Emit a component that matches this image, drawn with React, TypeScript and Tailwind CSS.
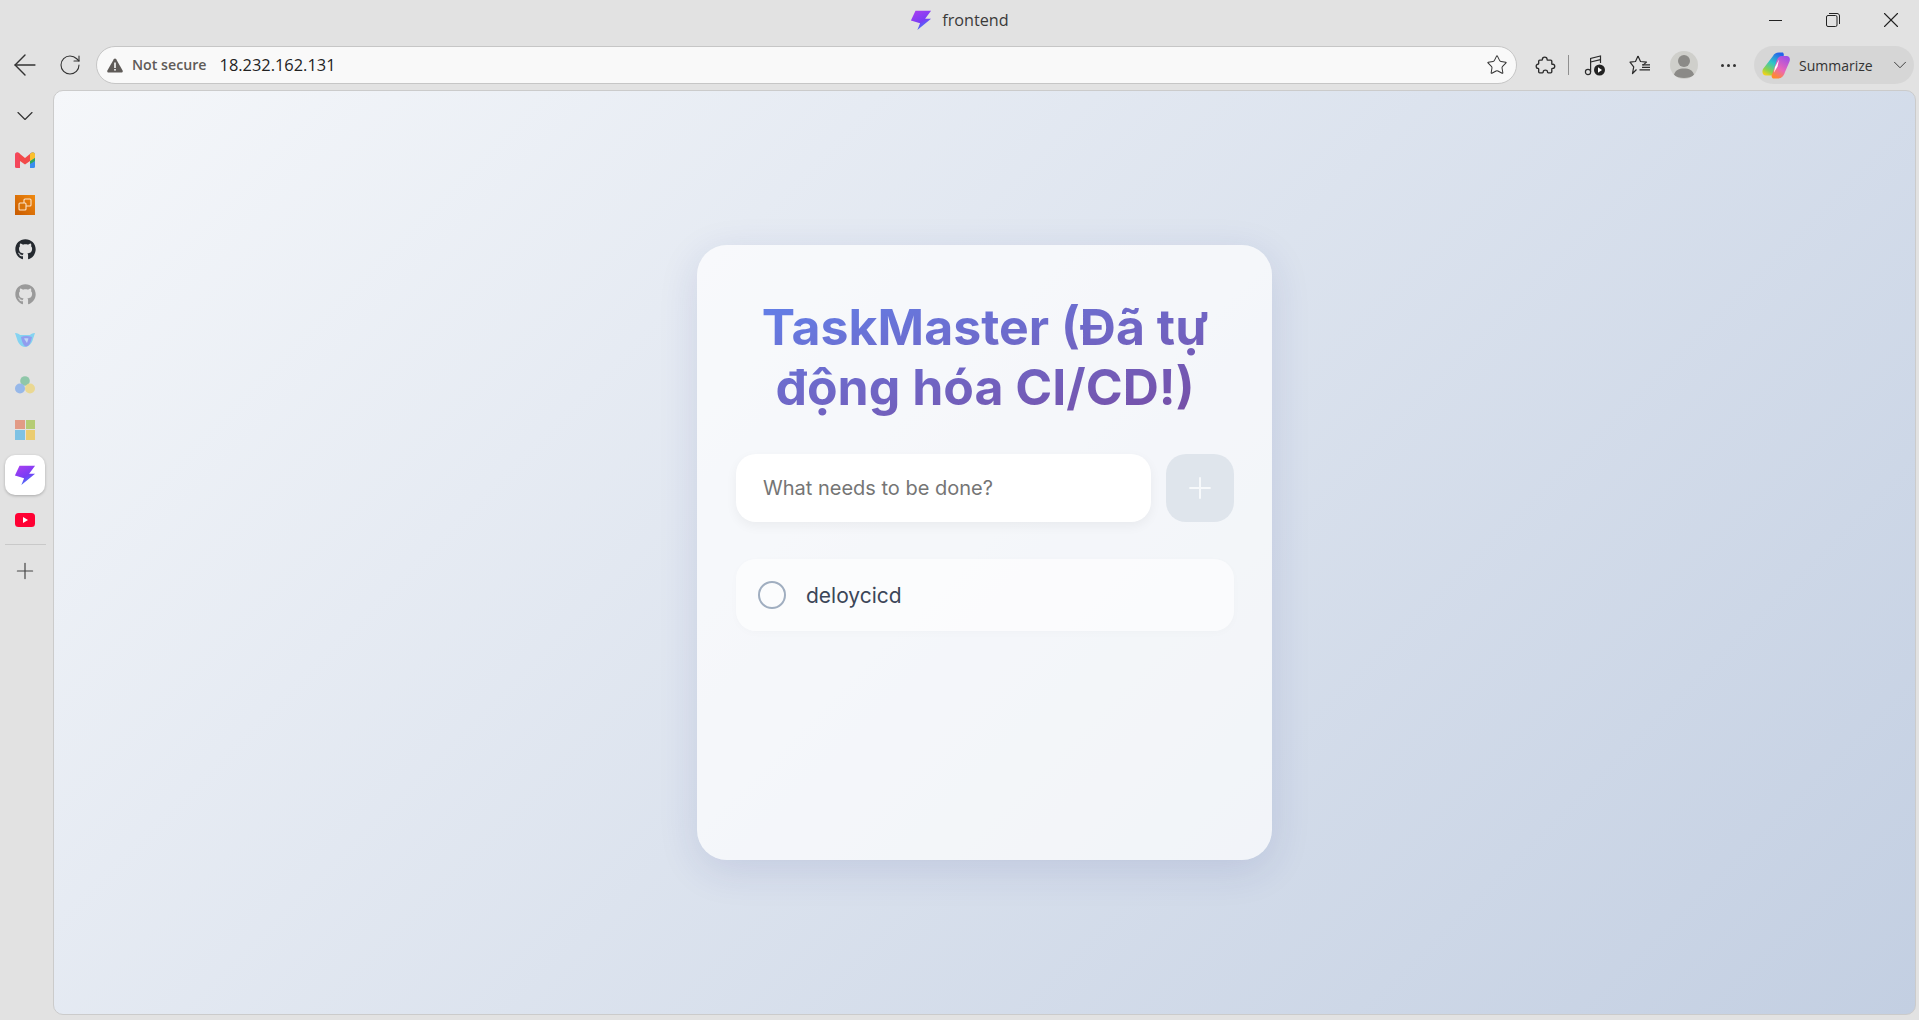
import { ArrowLeft, ChevronDown, Plus, RotateCw, Star, X } from "lucide-react"
import { FaGithub } from "react-icons/fa"

function Bolt({ size, id }: { size: number; id: string }) {
  return (
    <svg width={size} height={size} viewBox="0 0 24 24">
      <defs>
        <linearGradient id={id} x1="0.2" y1="0" x2="0.75" y2="1">
          <stop offset="0" stopColor="#a63ff0" />
          <stop offset="0.55" stopColor="#7a3cf5" />
          <stop offset="1" stopColor="#2f8cf8" />
        </linearGradient>
      </defs>
      <path d="M6 2h17l-6.500 8.500H23L8 23l3-7.500L1 12.500z" fill={`url(#${id})`} />
    </svg>
  )
}

function Gmail() {
  return (
    <svg width="20" height="16" viewBox="0 0 20 16">
      <path d="M0 2.500C0 .8 1.800-.4 3.200.6L5 2v14H1.500A1.500 1.500 0 0 1 0 14.500z" fill="#f4475b" />
      <path d="M15 2 16.800.6C18.200-.4 20 .8 20 2.500v12a1.500 1.500 0 0 1-1.500 1.500H15z" fill="#3b8df0" />
      <path d="M3.200.6 10 6l6.800-5.400L15 9l-5 3.600L5 9z" fill="#f24a4a" />
      <path d="M15 2 16.800.6C18.200-.4 20 .8 20 2.500V6l-5 3.600z" fill="#fbc02d" />
      <path d="M15 9.200 20 6v3l-5 3z" fill="#30a85a" />
    </svg>
  )
}

function AwsBox() {
  return (
    <svg width="20" height="20" viewBox="0 0 20 20">
      <defs>
        <linearGradient id="aws" x1="0" y1="1" x2="1" y2="0">
          <stop offset="0" stopColor="#c85a00" />
          <stop offset="1" stopColor="#f08a10" />
        </linearGradient>
      </defs>
      <rect width="20" height="20" fill="url(#aws)" />
      <rect x="9" y="4" width="7" height="7" rx="1" fill="none" stroke="#fbe3c8" strokeWidth="1.1" />
      <rect x="4" y="8" width="7" height="7" rx="1" fill="#d9740a" stroke="#fbe3c8" strokeWidth="1.1" />
    </svg>
  )
}

function HatIcon() {
  return (
    <svg width="20" height="16" viewBox="0 0 20 16" className="opacity-80">
      <path d="M0 1c3 0 4 1 5 2h10c1-1 2-2 5-2l-2 6c-1 4-4 8-8 8s-7-4-8-8z" fill="#6fd0f5" />
      <path d="M6 5c3-1.500 7-1.500 11 0-1 5-3 9.500-6 9.500-2 0-4-4-5-9.500z" fill="#7f8df2" />
      <path d="M9 6.500c1.500-.5 3-.5 4.500 0L12 11z" fill="#b9d4fb" />
    </svg>
  )
}

function TripleDots() {
  return (
    <svg width="20" height="18" viewBox="0 0 20 18" className="opacity-50">
      <circle cx="10" cy="5" r="4.800" fill="#3fae72" />
      <circle cx="5" cy="12.500" r="5" fill="#4f8ff0" />
      <circle cx="15" cy="12.500" r="5" fill="#f2cf45" />
    </svg>
  )
}

function Windows() {
  return (
    <div className="grid grid-cols-2 gap-[1px] w-[20px] h-[20px] opacity-50">
      <div className="bg-[#e2572c]" />
      <div className="bg-[#8ab80a]" />
      <div className="bg-[#1fa3e6]" />
      <div className="bg-[#f5b800]" />
    </div>
  )
}

function Youtube() {
  return (
    <svg width="20" height="14" viewBox="0 0 20 14">
      <rect width="20" height="14" rx="3.500" fill="#ff0033" />
      <path d="M8 4l5 3-5 3z" fill="#fff" />
    </svg>
  )
}

function Puzzle() {
  return (
    <svg width="21" height="21" viewBox="0 0 20 20" fill="none" stroke="#2b2b2b" strokeWidth="1.300" strokeLinejoin="round">
      <path d="M7 4.200C7 1.500 11.500 1.200 11.500 4c0 .6 0 .9.5.9h3c.6 0 1 .4 1 1v2.400c0 .5.3.7.8.6 2.400-.5 2.900 4 0 3.800-.5 0-.8.2-.8.7v2.600c0 .6-.4 1-1 1h-2.400c-.5 0-.7-.3-.7-.7.2-2.600-4.200-2.600-4.100 0 0 .4-.2.7-.7.7H4.500c-.6 0-1-.4-1-1v-2.700c0-.4-.3-.6-.7-.6C.6 12.800.6 8.700 2.800 8.800c.4 0 .7-.2.7-.6V5.900c0-.6.4-1 1-1h1.900c.4 0 .6-.2.6-.7z" />
    </svg>
  )
}

function MusicPlay() {
  return (
    <svg width="22" height="22" viewBox="0 0 22 22" fill="none" stroke="#2b2b2b" strokeWidth="1.200">
      <circle cx="4" cy="18" r="2.600" />
      <path d="M6.600 18V4.500L16.500 2v7" />
      <path d="M6.600 8l9.900-2.400" />
      <circle cx="15.500" cy="16" r="5.500" fill="#222" stroke="none" />
      <path d="M14 13.300l4 2.700-4 2.700z" fill="#fff" stroke="none" />
    </svg>
  )
}

function FavoritesIcon() {
  return (
    <svg width="22" height="20" viewBox="0 0 22 20" fill="none" stroke="#2b2b2b" strokeWidth="1.200" strokeLinejoin="round">
      <path d="M9 1l2.500 5.500 6 .6-3.500 3M7.500 14.500L3.500 18.500l1.200-6.700L1 7.200l5.500-.7L9 1" />
      <path d="M13 9.800h8M13 12.300h8M10.500 14.800h10.500" />
    </svg>
  )
}

function Avatar() {
  return (
    <div className="w-[28px] h-[28px] rounded-full bg-[#cfcfcb] flex items-center justify-center overflow-hidden">
      <svg width="28" height="28" viewBox="0 0 28 28">
        <circle cx="14" cy="10" r="6" fill="#8b8a87" />
        <path d="M4 24c1-5 5-6.500 10-6.500s9 1.500 10 6.500c-2 2-6 3-10 3s-8-1-10-3z" fill="#8b8a87" />
      </svg>
    </div>
  )
}

function CopilotIcon() {
  return (
    <svg width="28" height="27" viewBox="0 0 28 27">
      <defs>
        <linearGradient id="copL" x1="0.7" y1="0" x2="0.2" y2="1">
          <stop offset="0" stopColor="#2563eb" />
          <stop offset="0.45" stopColor="#2fc4c8" />
          <stop offset="0.8" stopColor="#8fd24a" />
          <stop offset="1" stopColor="#f2d21b" />
        </linearGradient>
        <linearGradient id="copR" x1="0.8" y1="0" x2="0.3" y2="1">
          <stop offset="0" stopColor="#9d4fe8" />
          <stop offset="0.6" stopColor="#ea66b8" />
          <stop offset="1" stopColor="#ff8a2e" />
        </linearGradient>
      </defs>
      <path d="M11 4C12 2 14 .5 17 .5h4c2 2.500 0 5-1 7l-5 12c-1 3-3 4-6 4H4c-3 0-4.500-3-3-6.500z" fill="url(#copL)" />
      <path d="M16 26.500h-5c-2.500-2-1-4.500 0-6.500l4-12c1-3 3-4 5-4h4.500c3 0 4 2.500 3 5.500L23 20c-1 3.500-3 6.500-7 6.500z" fill="url(#copR)" />
      <path d="M13 15l4-7.500-1.500 7-3.500 6z" fill="#fff" />
    </svg>
  )
}

function RailItem({ children, active }: { children: React.ReactNode; active?: boolean }) {
  return (
    <div
      className={
        active
          ? "w-[40px] h-[40px] rounded-[10px] bg-white shadow-[0_1px_3px_rgba(0,0,0,0.25)] flex items-center justify-center"
          : "w-[40px] h-[45px] flex items-center justify-center"
      }
    >
      {children}
    </div>
  )
}

export default function App() {
  return (
    <div className="h-screen w-full overflow-hidden bg-[#e2e2e2] flex flex-col font-['Open_Sans',sans-serif] text-[#333]">
      {/* title bar */}
      <div className="h-[40px] shrink-0 grid grid-cols-[1fr_auto_1fr] items-center">
        <div />
        <div className="flex items-center gap-[10px]">
          <Bolt size={22} id="boltTitle" />
          <span className="text-[16.2px] text-[#3a3a3a]">frontend</span>
        </div>
        <div className="flex justify-end mr-[-1px]">
          <div className="w-[58px] h-[36px] flex items-center justify-center">
            <div className="w-[13px] h-px bg-[#222]" />
          </div>
          <div className="w-[58px] h-[36px] flex items-center justify-center">
            <svg width="14" height="14" viewBox="0 0 14 14" fill="none" stroke="#222" strokeWidth="1">
              <rect x="0.500" y="2.500" width="10.500" height="11" rx="1.500" />
              <path d="M3 .5h8c1.500 0 2.500 1 2.500 2.500v8" />
            </svg>
          </div>
          <div className="w-[58px] h-[36px] flex items-center justify-center">
            <X size={26} strokeWidth={1} color="#222" />
          </div>
        </div>
      </div>

      {/* toolbar */}
      <div className="h-[50px] shrink-0 flex items-start pt-[6px]">
        <div className="w-[44px] h-[38px] ml-[3px] flex items-center justify-center">
          <ArrowLeft size={34} strokeWidth={1} color="#333" />
        </div>
        <div className="w-[44px] h-[38px] ml-[1px] flex items-center justify-center">
          <RotateCw size={24} strokeWidth={1.1} color="#333" />
        </div>
        <div className="ml-[4px] flex-1 h-[38px] rounded-full bg-[#f9f9f9] border border-[#c6c6c6] flex items-center pl-[10px] pr-[8px]">
          <svg width="16" height="15" viewBox="0 0 16 15">
            <path d="M8 .5c.5 0 .9.3 1.200.8l6.400 11.200c.5 1-.1 2-1.200 2H1.600c-1.100 0-1.700-1-1.200-2L6.800 1.300C7.100.8 7.500.5 8 .5z" fill="#5f5b58" />
            <rect x="7.200" y="4.500" width="1.600" height="5.500" fill="#f9f9f9" />
            <rect x="7.200" y="11" width="1.600" height="1.600" fill="#f9f9f9" />
          </svg>
          <span className="ml-[9px] text-[14.2px] font-semibold text-[#5f5b58]">Not secure</span>
          <span className="ml-[13px] text-[16.4px] text-[#222]">18.232.162.131</span>
          <Star size={22} strokeWidth={1.1} color="#333" className="ml-auto" />
        </div>
        <div className="w-[40px] h-[38px] ml-[8px] flex items-center justify-center">
          <Puzzle />
        </div>
        <div className="w-px h-[20px] ml-[3px] mt-[9px] bg-[#8f8f8f]" />
        <div className="w-[40px] h-[38px] ml-[6px] flex items-center justify-center">
          <MusicPlay />
        </div>
        <div className="w-[40px] h-[38px] ml-[5px] flex items-center justify-center">
          <FavoritesIcon />
        </div>
        <div className="w-[40px] h-[38px] ml-[4px] flex items-center justify-center">
          <Avatar />
        </div>
        <div className="w-[40px] h-[38px] ml-[4px] flex items-center justify-center gap-[3px]">
          <div className="w-[3px] h-[3px] rounded-full bg-[#333]" />
          <div className="w-[3px] h-[3px] rounded-full bg-[#333]" />
          <div className="w-[3px] h-[3px] rounded-full bg-[#333]" />
        </div>
        <div className="w-[160px] h-[38px] ml-[6px] mr-[5px] rounded-full bg-[#d6d6d6] flex items-center pl-[8px] pr-[3px]">
          <CopilotIcon />
          <span className="ml-[9px] text-[14px] text-[#333]">Summarize</span>
          <ChevronDown size={22} strokeWidth={1} color="#333" className="ml-auto" />
        </div>
      </div>

      {/* body */}
      <div className="flex-1 min-h-0 flex pb-[5px] pr-[3px]">
        <div className="w-[50px] mr-[3px] shrink-0 flex flex-col items-center">
          <div className="h-[47px] pt-[5px] flex items-center justify-center">
            <ChevronDown size={28} strokeWidth={1} color="#333" />
          </div>
          <RailItem><Gmail /></RailItem>
          <RailItem><AwsBox /></RailItem>
          <RailItem><FaGithub size={21} color="#24292f" /></RailItem>
          <RailItem><FaGithub size={21} color="#9a9a9a" /></RailItem>
          <RailItem><HatIcon /></RailItem>
          <RailItem><TripleDots /></RailItem>
          <RailItem><Windows /></RailItem>
          <div className="mt-[3px] mb-[2px]">
            <RailItem active><Bolt size={22} id="boltRail" /></RailItem>
          </div>
          <RailItem><Youtube /></RailItem>
          <div className="w-[41px] h-px bg-[#c9c9c9] mt-[2px]" />
          <div className="h-[52px] flex items-center justify-center">
            <Plus size={26} strokeWidth={1.1} color="#444" />
          </div>
        </div>

        <main className="flex-1 min-w-0 rounded-[10px] border border-[#cbcbcb] bg-linear-135 from-[#f5f7fa] to-[#c3cfe2] flex items-center justify-center">
          <div className="w-[575px] h-[615px] rounded-[30px] bg-white/70 shadow-[0_10px_40px_rgba(31,38,135,0.12)] pl-[39px] pr-[38px] pt-[52px]">
            <h1 className="font-['Inter',sans-serif] text-[50px] leading-[60px] font-bold text-center bg-linear-to-br from-[#5f82ec] to-[#764ba2] bg-clip-text text-transparent">
              TaskMaster (Đã tự động hóa CI/CD!)
            </h1>
            <div className="mt-[37px] flex gap-[15px] font-['Inter',sans-serif]">
              <input
                placeholder="What needs to be done?"
                className="flex-1 min-w-0 h-[68px] rounded-[20px] bg-white px-[27px] text-[20px] text-[#333] placeholder:text-[#757575] shadow-[0_4px_12px_rgba(0,0,0,0.05)] outline-none"
              />
              <button className="w-[68px] h-[68px] rounded-[20px] bg-[#dfe5ec] flex items-center justify-center">
                <Plus size={34} strokeWidth={1.4} color="#f7f9fb" />
              </button>
            </div>
            <div className="mt-[37px] h-[72px] rounded-[20px] bg-white/60 shadow-[0_2px_8px_rgba(0,0,0,0.02)] flex items-center pl-[22px] font-['Inter',sans-serif]">
              <div className="w-[28px] h-[28px] rounded-full border-[2.5px] border-[#a0aec0]" />
              <span className="ml-[20px] mt-[1px] text-[21px] text-[#3c4658]">deloycicd</span>
            </div>
          </div>
        </main>
      </div>
    </div>
  )
}
